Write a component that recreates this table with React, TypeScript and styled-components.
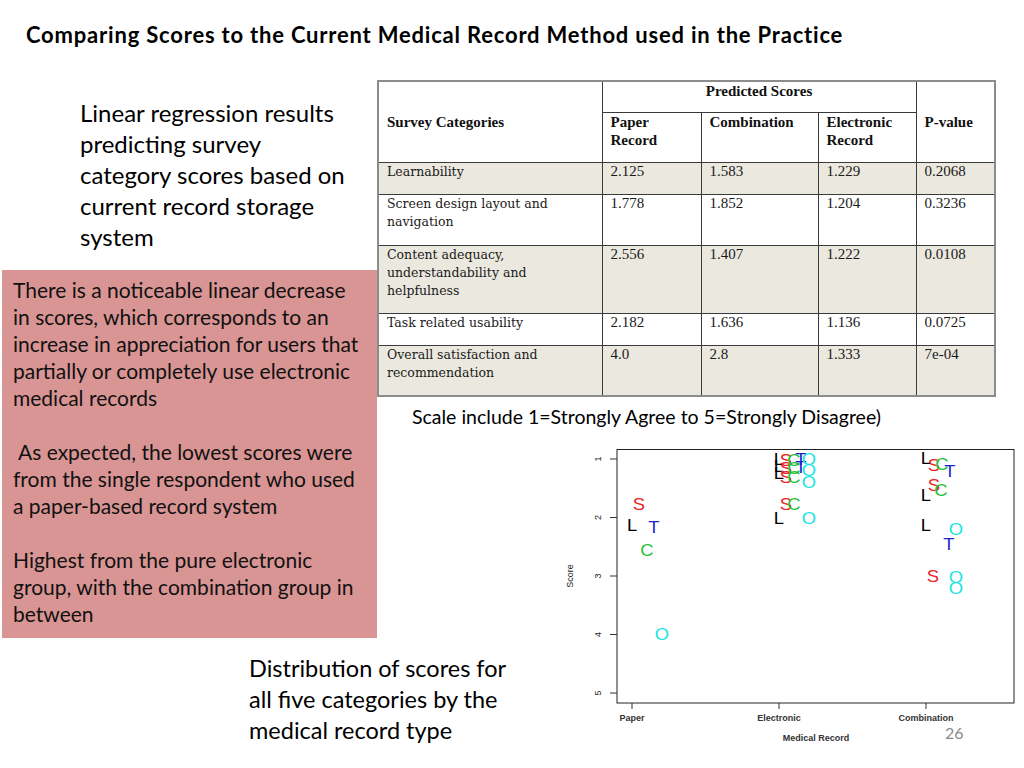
import React from "react";
import styled, { createGlobalStyle } from "styled-components";

const Global = createGlobalStyle`
  html, body { margin: 0; padding: 0; background: #ffffff; }
  body { width: 1024px; height: 768px; overflow: hidden; }
`;

const Slide = styled.div`
  position: relative;
  width: 1024px;
  height: 768px;
  background: #ffffff;
  font-family: Lato, "Open Sans", sans-serif;
  color: #000;
`;

const Title = styled.h1`
  margin: 0;
  padding: 20px 0 0 26px;
  font-size: 22px;
  line-height: 30px;
  font-weight: 700;
  letter-spacing: 0.8px;
  white-space: nowrap;
`;

const Body = styled.div`
  display: flex;
  margin-top: 30px;
`;

const LeftCol = styled.div`
  width: 377px;
  flex: none;
  display: flex;
  flex-direction: column;
`;

const Intro = styled.p`
  margin: 17px 0 0 80px;
  font-size: 24px;
  line-height: 31px;
  white-space: nowrap;
`;

const NoteBox = styled.div`
  margin: 18px 0 0 2px;
  width: 375px;
  height: 368px;
  box-sizing: border-box;
  background: #d99594;
  padding: 6px 0 0 11px;
  font-size: 21px;
  line-height: 27px;
  color: #111;
  white-space: nowrap;
`;

const NotePara = styled.p<{ $indent?: boolean }>`
  margin: 0 0 27px 0;
  text-indent: ${(p) => (p.$indent ? "5px" : "0")};
  &:last-child { margin-bottom: 0; }
`;

const BottomText = styled.p`
  margin: 15px 0 0 249px;
  font-size: 23.5px;
  line-height: 31px;
  white-space: nowrap;
`;

const RightCol = styled.div`
  flex: 1;
  display: flex;
  flex-direction: column;
`;

const Table = styled.table`
  width: 617px;
  border-collapse: collapse;
  border: 2px solid #8c8c8c;
  table-layout: fixed;
`;

const HeadRow = styled.tr<{ $h: number }>`
  height: ${(p) => p.$h}px;
`;

const HeadCell = styled.th<{ $center?: boolean; $middle?: boolean }>`
  font-family: "Liberation Serif", serif;
  font-weight: 700;
  font-size: 15px;
  line-height: 18px;
  text-align: ${(p) => (p.$center ? "center" : "left")};
  vertical-align: ${(p) => (p.$middle ? "middle" : "top")};
  padding: 0 8px;
  border: 1px solid #3a3a3a;
  color: #111;
  background: #ffffff;
`;

const Row = styled.tr<{ $shaded?: boolean; $h: number }>`
  height: ${(p) => p.$h}px;
  background: ${(p) => (p.$shaded ? "#ebe9df" : "#ffffff")};
`;

const LabelCell = styled.td`
  font-family: "DejaVu Serif", serif;
  font-size: 12.5px;
  line-height: 18px;
  padding: 0 8px;
  vertical-align: top;
  border: 1px solid #3a3a3a;
  color: #1a1a1a;
`;

const NumCell = styled.td`
  font-family: "Liberation Serif", serif;
  font-size: 15px;
  line-height: 17px;
  padding: 0 8px;
  vertical-align: top;
  border: 1px solid #3a3a3a;
  color: #1a1a1a;
`;

const ScaleNote = styled.p`
  margin: 7px 0 0 35px;
  font-size: 19.5px;
  line-height: 26px;
  white-space: nowrap;
`;

const PlotSvg = styled.svg`
  display: block;
  margin: 11px 0 0 188px;
  font-family: "Liberation Sans", Arial, sans-serif;
`;

const PageNum = styled.div`
  position: absolute;
  left: 945px;
  top: 722px;
  font-size: 16px;
  line-height: 22px;
  color: #8a8a8a;
`;

type Pt = [string, number, number];

const COLORS: Record<string, string> = {
  L: "#000000",
  S: "#e8232a",
  C: "#1fbf3a",
  T: "#2323cc",
  O: "#21e3e3",
};

const POINTS: Pt[] = [
  ["L", 632, 524], ["S", 639, 503], ["C", 647, 549], ["T", 654, 526], ["O", 662, 633],
  ["L", 779, 458], ["L", 779, 465], ["L", 779, 472],
  ["S", 786, 459], ["S", 786, 467], ["S", 786, 476],
  ["C", 794, 459], ["C", 794, 467], ["C", 794, 476],
  ["T", 801, 458], ["T", 801, 466],
  ["O", 809, 458], ["O", 809, 469], ["O", 809, 481],
  ["S", 786, 503], ["C", 794, 503], ["L", 779, 517], ["O", 809, 517],
  ["L", 926, 457], ["S", 934, 464], ["C", 942, 463], ["T", 950, 470],
  ["S", 934, 484], ["C", 941, 489], ["L", 926, 494],
  ["L", 926, 524], ["O", 956, 528], ["T", 949, 543],
  ["S", 933, 575], ["O", 956, 576], ["O", 956, 587],
];

const Y_TICKS = [1, 2, 3, 4, 5];
const yOf = (v: number) => 458 + (v - 1) * 58.5;
const X_TICKS: [string, number][] = [["Paper", 632], ["Electronic", 779], ["Combination", 926]];

function ScorePlot() {
  return (
    <PlotSvg width={459} height={310} viewBox="565 440 459 310">
      <rect x={617} y={448.5} width={397} height={253.5} fill="none" stroke="#222" strokeWidth={1} />
      {Y_TICKS.map((v) => (
        <g key={v}>
          <line x1={610} x2={617} y1={yOf(v)} y2={yOf(v)} stroke="#333" strokeWidth={1} />
          <text
            x={598}
            y={yOf(v)}
            fontSize={9}
            fill="#222"
            textAnchor="middle"
            dominantBaseline="central"
            transform={`rotate(-90 598 ${yOf(v)})`}
          >
            {v}
          </text>
        </g>
      ))}
      <text x={570} y={575} fontSize={9} fill="#222" textAnchor="middle" dominantBaseline="central" transform="rotate(-90 570 575)">
        Score
      </text>
      {X_TICKS.map(([label, x]) => (
        <g key={label}>
          <line x1={x} x2={x} y1={702} y2={708} stroke="#333" strokeWidth={1} />
          <text x={x} y={717} fontSize={9} fontWeight={700} fill="#333" textAnchor="middle" dominantBaseline="central">
            {label}
          </text>
        </g>
      ))}
      <text x={816} y={737} fontSize={9} fontWeight={700} fill="#333" textAnchor="middle" dominantBaseline="central">
        Medical Record
      </text>
      {POINTS.map(([ch, x, y], i) => (
        <text
          key={i}
          x={x}
          y={y}
          fontSize={16}
          fill={COLORS[ch]}
          textAnchor="middle"
          dominantBaseline="central"
          transform={`translate(${x} ${y}) scale(1.15 1) translate(${-x} ${-y})`}
        >
          {ch}
        </text>
      ))}
    </PlotSvg>
  );
}

const ROWS: { label: React.ReactNode; vals: string[]; shaded: boolean; h: number }[] = [
  { label: "Learnability", vals: ["2.125", "1.583", "1.229", "0.2068"], shaded: true, h: 32 },
  { label: <>Screen design layout and<br />navigation</>, vals: ["1.778", "1.852", "1.204", "0.3236"], shaded: false, h: 51 },
  { label: <>Content adequacy,<br />understandability and<br />helpfulness</>, vals: ["2.556", "1.407", "1.222", "0.0108"], shaded: true, h: 68 },
  { label: "Task related usability", vals: ["2.182", "1.636", "1.136", "0.0725"], shaded: false, h: 32 },
  { label: <>Overall satisfaction and<br />recommendation</>, vals: ["4.0", "2.8", "1.333", "7e-04"], shaded: true, h: 51 },
];

export default function App() {
  return (
    <Slide>
      <Global />
      <Title>Comparing Scores to the Current Medical Record Method used in the Practice</Title>
      <Body>
        <LeftCol>
          <Intro>
            Linear regression results<br />predicting survey<br />category scores based on<br />current record storage<br />system
          </Intro>
          <NoteBox>
            <NotePara>
              There is a noticeable linear decrease<br />in scores, which corresponds to an<br />increase in appreciation for users that<br />partially or completely use electronic<br />medical records
            </NotePara>
            <NotePara $indent>
              As expected, the lowest scores were<br />from the single respondent who used<br />a paper-based record system
            </NotePara>
            <NotePara>
              Highest from the pure electronic<br />group, with the combination group in<br />between
            </NotePara>
          </NoteBox>
          <BottomText>
            Distribution of scores for<br />all five categories by the<br />medical record type
          </BottomText>
        </LeftCol>
        <RightCol>
          <Table>
            <colgroup>
              <col style={{ width: 224 }} />
              <col style={{ width: 99 }} />
              <col style={{ width: 117 }} />
              <col style={{ width: 98 }} />
              <col style={{ width: 79 }} />
            </colgroup>
            <thead>
              <HeadRow $h={31}>
                <HeadCell rowSpan={2} $middle>Survey Categories</HeadCell>
                <HeadCell colSpan={3} $center>Predicted Scores</HeadCell>
                <HeadCell rowSpan={2} $middle>P-value</HeadCell>
              </HeadRow>
              <HeadRow $h={50}>
                <HeadCell>Paper<br />Record</HeadCell>
                <HeadCell>Combination</HeadCell>
                <HeadCell>Electronic<br />Record</HeadCell>
              </HeadRow>
            </thead>
            <tbody>
              {ROWS.map((r, i) => (
                <Row key={i} $shaded={r.shaded} $h={r.h}>
                  <LabelCell>{r.label}</LabelCell>
                  {r.vals.map((v, j) => (
                    <NumCell key={j}>{v}</NumCell>
                  ))}
                </Row>
              ))}
            </tbody>
          </Table>
          <ScaleNote>Scale include 1=Strongly Agree to 5=Strongly Disagree)</ScaleNote>
          <ScorePlot />
        </RightCol>
      </Body>
      <PageNum>26</PageNum>
    </Slide>
  );
}
